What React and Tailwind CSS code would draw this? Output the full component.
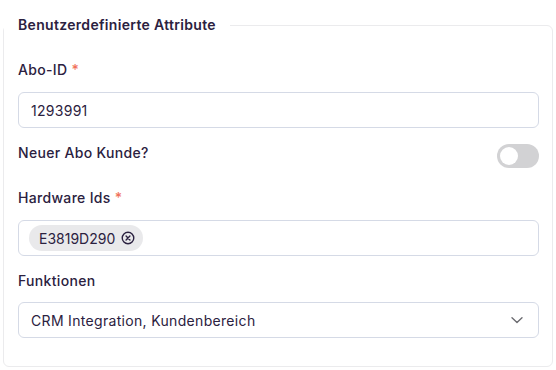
import { useState } from 'react'

const labelCls = 'block text-[14px] leading-5 font-medium text-[#2b2140]'
const boxCls = 'w-full h-9 rounded-md border border-[#d5dae6] bg-white px-3 text-[14px] text-[#2b2140] outline-none'

export default function App() {
    const [aboId, setAboId] = useState('1293991')
    const [neu, setNeu] = useState(false)
    const [ids, setIds] = useState(['E3819D290'])

    return (
        <div className="w-[556px] h-[370px] bg-white pt-[17px] px-[3px] tracking-[0.02em] font-['Inter','Liberation_Sans',sans-serif]">
            <fieldset className="h-[350px] rounded-md border border-[#ebebed] pl-[14px] pr-[13px]">
                <legend className="-ml-[14px] px-[14px] text-[14px] leading-4 font-semibold text-[#2b2140]">
                    Benutzerdefinierte Attribute
                </legend>

                <label className={labelCls + ' mt-[27px]'}>
                    Abo-ID <span className="text-[#f0715a]">*</span>
                </label>
                <input
                    className={boxCls + ' mt-3 tracking-[0.02em]'}
                    value={aboId}
                    onChange={e => setAboId(e.target.value)}
                />

                <div className="mt-[15px] flex items-start justify-between">
                    <span className={labelCls}>Neuer Abo Kunde?</span>
                    <button
                        type="button"
                        onClick={() => setNeu(!neu)}
                        className={'mt-[1px] relative w-[42px] h-6 rounded-full transition ' + (neu ? 'bg-[#6b4de6]' : 'bg-[#d2d2d4]')}
                    >
                        <span
                            className={'absolute top-[3px] w-[18px] h-[18px] rounded-full bg-white transition-all ' + (neu ? 'left-[21px]' : 'left-[3px]')}
                        />
                    </button>
                </div>

                <label className={labelCls + ' mt-[20px]'}>
                    Hardware Ids <span className="text-[#f0715a]">*</span>
                </label>
                <div className="mt-3 w-full h-9 rounded-md border border-[#d5dae6] bg-white px-[10px] flex items-center gap-2">
                    {ids.map(id => (
                        <span key={id} className="h-[26px] rounded-full bg-[#e9e9eb] pl-[10px] pr-[8px] flex items-center gap-[6px] text-[14px] tracking-normal text-[#2b2140]">
                            {id}
                            <button type="button" onClick={() => setIds(ids.filter(x => x !== id))} className="text-[#2b2140]">
                                <svg width="14" height="14" viewBox="0 0 16 16" fill="none" stroke="currentColor" strokeWidth="1.6" strokeLinecap="round">
                                    <circle cx="8" cy="8" r="6.6" />
                                    <path d="M5.8 5.8l4.4 4.4M10.2 5.8l-4.4 4.4" />
                                </svg>
                            </button>
                        </span>
                    ))}
                </div>

                <label className={labelCls + ' mt-[15px]'}>Funktionen</label>
                <div className={boxCls + ' mt-[11px] flex items-center justify-between'}>
                    <span>CRM Integration, Kundenbereich</span>
                    <svg width="14" height="14" viewBox="0 0 14 14" fill="none" stroke="#6b6b70" strokeWidth="1.4" strokeLinecap="round" strokeLinejoin="round" className="mr-[2px]">
                        <path d="M2 4.8l5 4.6 5-4.6" />
                    </svg>
                </div>
            </fieldset>
        </div>
    )
}
